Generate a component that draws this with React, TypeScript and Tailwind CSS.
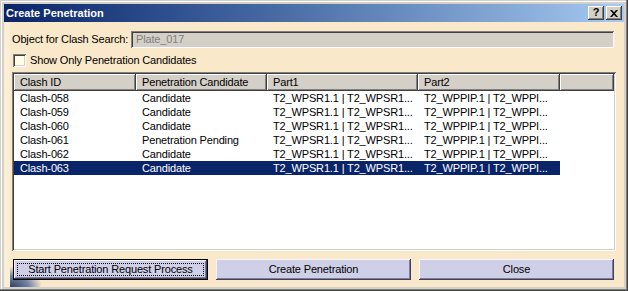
import React from "react";

const rows = [
  { id: "Clash-058", cand: "Candidate" },
  { id: "Clash-059", cand: "Candidate" },
  { id: "Clash-060", cand: "Candidate" },
  { id: "Clash-061", cand: "Penetration Pending" },
  { id: "Clash-062", cand: "Candidate" },
  { id: "Clash-063", cand: "Candidate", selected: true },
];

const raised =
  "shadow-[inset_-1px_-1px_0_#404040,inset_1px_1px_0_#ffffff,inset_-2px_-2px_0_#808080]";
const sunken =
  "shadow-[inset_1px_1px_0_#808080,inset_-1px_-1px_0_#ffffff,inset_2px_2px_0_#404040,inset_-2px_-2px_0_#d4d0c8]";

function HeaderCell({ w, label }: { w: string; label?: string }) {
  return (
    <div className={`${w} h-full bg-[#d4d0c8] ${raised} pl-[6px] flex items-center shrink-0 whitespace-nowrap`}>
      {label}
    </div>
  );
}

function Btn({ label, focused }: { label: string; focused?: boolean }) {
  const btnShadow =
    "shadow-[inset_-1px_-1px_0_#40405a,inset_1px_1px_0_#f4f4ff,inset_-2px_-2px_0_#7c7c9c]";
  if (focused) {
    return (
      <div className="h-[21px] border border-black">
        <div className={`h-full bg-[#cfcfe7] ${btnShadow} p-[3px]`}>
          <div className="h-full border border-dotted border-black flex items-center justify-center whitespace-nowrap">
            {label}
          </div>
        </div>
      </div>
    );
  }
  return (
    <div className={`h-[21px] bg-[#cfcfe7] ${btnShadow} flex items-center justify-center whitespace-nowrap`}>
      {label}
    </div>
  );
}

export default function App() {
  return (
    <div className="w-[628px] h-[291px] bg-[#d4d0c8] p-[4px] flex flex-col font-['Liberation_Sans',Arial,sans-serif] text-[11px] tracking-[-0.15px] text-black shadow-[inset_-1px_-1px_0_#404040,inset_-2px_-2px_0_#808080,inset_1px_1px_0_#d4d0c8,inset_2px_2px_0_#ffffff]">
      {/* Caption */}
      <div className="h-[18px] shrink-0 bg-gradient-to-r from-[#0a246a] to-[#a6caf0] flex items-center pl-[2px] pr-[2px]">
        <span className="text-white font-bold text-[11px] tracking-normal flex-1">Create Penetration</span>
        <div className={`w-[16px] h-[14px] bg-[#d4d0c8] ${raised} flex items-center justify-center font-bold text-[11px] leading-none pb-[1px]`}>
          ?
        </div>
        <div className={`ml-[2px] w-[16px] h-[14px] bg-[#d4d0c8] ${raised} flex items-center justify-center`}>
          <svg width="8" height="7" viewBox="0 0 8 7">
            <path d="M0 0h2l2 2.2L6 0h2L5 3.5 8 7H6L4 4.8 2 7H0l3-3.5z" fill="#000" />
          </svg>
        </div>
      </div>

      {/* Body */}
      <div className="relative flex-1 bg-[#f9e8c9] flex flex-col px-[8px] pt-[9px] pb-[7px] overflow-hidden">
        <div className="absolute left-[-6px] bottom-[-6px] w-[44px] h-[26px] rounded-full bg-[radial-gradient(ellipse_at_30%_80%,#2e3f63_0%,#6f82a3_40%,rgba(249,232,201,0)_72%)]" />
        <div className="absolute left-0 top-0 bottom-0 w-[6px] bg-[#fbeed6]" />

        <div className="relative flex items-center h-[17px] shrink-0">
          <span className="w-[119px] shrink-0 whitespace-nowrap">Object for Clash Search:</span>
          <div className={`flex-1 mr-[2px] h-[17px] bg-[#d4d0c8] ${sunken} flex items-center pl-[5px] text-[#808080]`}>
            Plate_017
          </div>
        </div>

        <div className="relative flex items-center h-[13px] mt-[6px] shrink-0">
          <div className={`ml-[1px] w-[13px] h-[13px] bg-[#fffde6] ${sunken}`} />
          <span className="ml-[4px] whitespace-nowrap">Show Only Penetration Candidates</span>
        </div>

        <div className={`relative flex-1 mt-[5px] bg-white ${sunken} p-[2px] flex flex-col`}>
          <div className="flex h-[17px] shrink-0">
            <HeaderCell w="w-[122px]" label="Clash ID" />
            <HeaderCell w="w-[131px]" label="Penetration Candidate" />
            <HeaderCell w="w-[151px]" label="Part1" />
            <HeaderCell w="w-[142px]" label="Part2" />
            <div className={`flex-1 h-full bg-[#d4d0c8] ${raised}`} />
          </div>
          {rows.map((r) => (
            <div key={r.id} className="flex h-[14px] items-center">
              <div
                className={`flex w-[546px] h-full items-center ${
                  r.selected ? "bg-[#0a246a] text-white" : ""
                }`}
              >
                <div className="w-[122px] pl-[6px] shrink-0">{r.id}</div>
                <div className="w-[131px] pl-[6px] shrink-0 whitespace-nowrap">{r.cand}</div>
                <div className="w-[151px] pl-[6px] shrink-0 whitespace-nowrap">T2_WPSR1.1 | T2_WPSR1...</div>
                <div className="w-[142px] pl-[6px] shrink-0 whitespace-nowrap">T2_WPPIP.1 | T2_WPPI...</div>
              </div>
            </div>
          ))}
        </div>

        <div className="relative grid grid-cols-3 gap-[8px] mt-[8px] pl-[1px] pr-[2px] shrink-0">
          <Btn label="Start Penetration Request Process" focused />
          <Btn label="Create Penetration" />
          <Btn label="Close" />
        </div>
      </div>
    </div>
  );
}
